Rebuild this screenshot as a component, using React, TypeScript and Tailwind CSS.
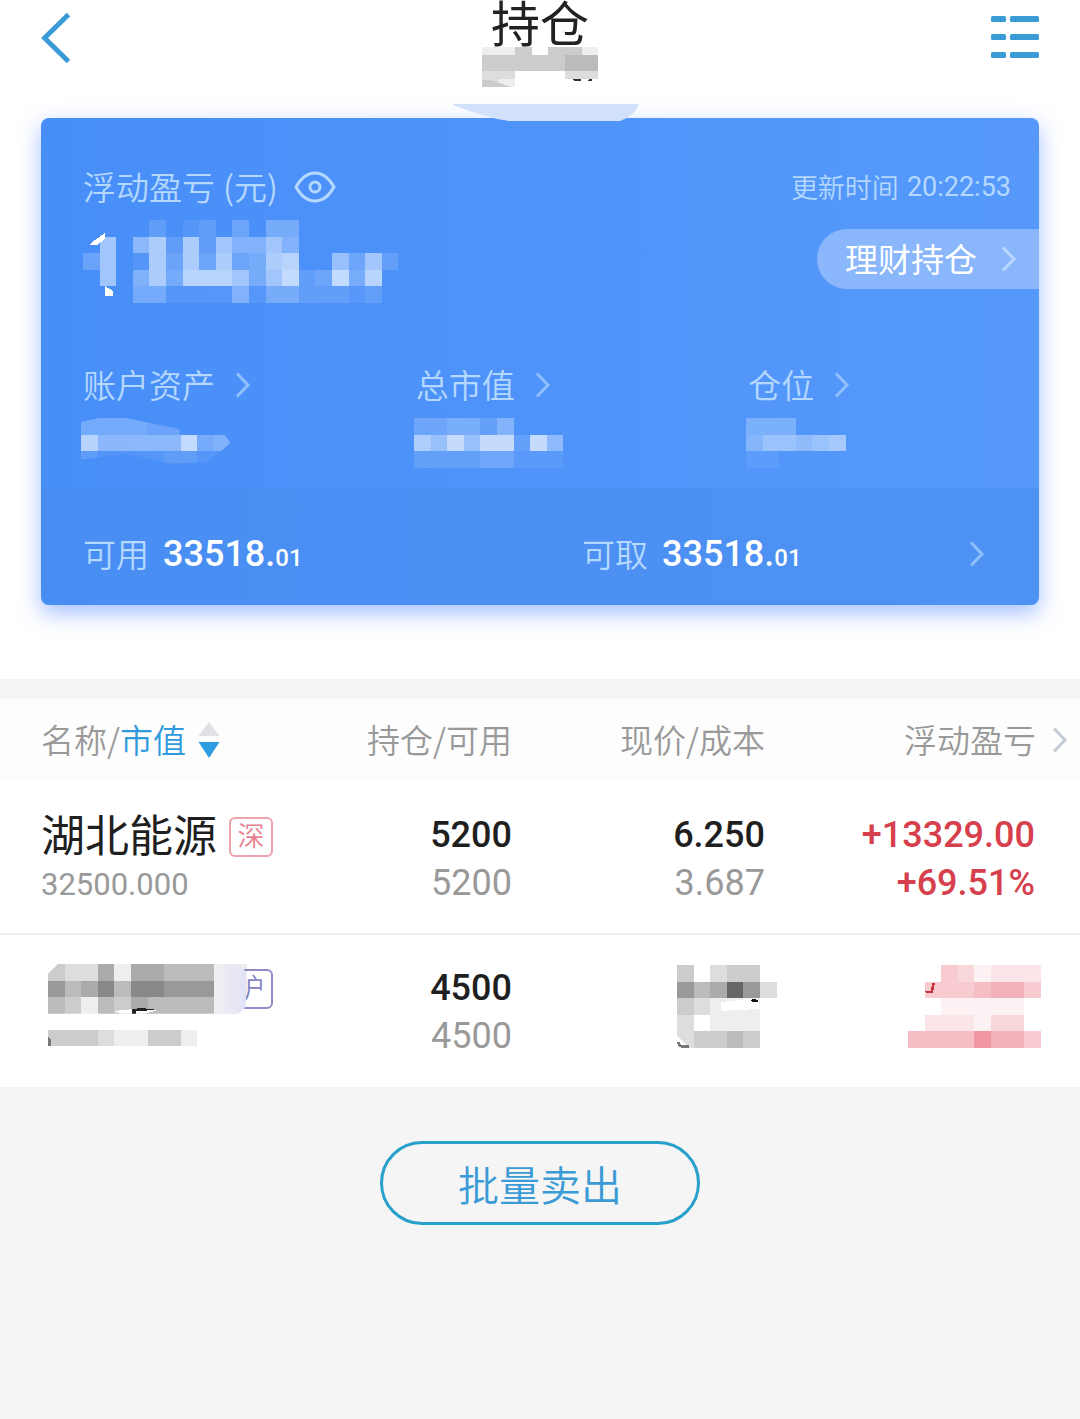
import type { ReactNode } from "react";

const CELL = 16.6;

type MosaicProps = {
  // one string per row, one hex digit (0-f) per cell for its opacity
  rows: string[];
  rowHeight?: number;
  className?: string;
  children?: ReactNode;
};

function Mosaic({ rows, rowHeight = CELL, className = "", children }: MosaicProps) {
  const width = rows[0].length * CELL;
  const height = rows.length * rowHeight;

  return (
    <svg
      width={width}
      height={height}
      viewBox={`0 0 ${width} ${height}`}
      className={`block shrink-0 ${className}`}
      fill="currentColor"
      shapeRendering="crispEdges"
      aria-hidden
    >
      {rows.map((row, y) =>
        row.split("").map((level, x) =>
          level === "0" ? null : (
            <rect
              key={`${x}-${y}`}
              x={x * CELL}
              y={y * rowHeight}
              width={CELL}
              height={rowHeight}
              opacity={parseInt(level, 16) / 15}
            />
          )
        )
      )}
      {children}
    </svg>
  );
}

function Chevron({ className = "" }: { className?: string }) {
  return (
    <svg
      width="16"
      height="28"
      viewBox="0 0 16 28"
      fill="none"
      stroke="currentColor"
      strokeWidth="3"
      className={`shrink-0 ${className}`}
      aria-hidden
    >
      <path d="M2 2.5 13 14 2 25.5" />
    </svg>
  );
}

function Header() {
  return (
    <header className="grid h-[118px] grid-cols-[1fr_auto_1fr] items-start bg-white px-[41px]">
      <button type="button" aria-label="返回" className="mt-3 justify-self-start text-[#3a9bd6]">
        <svg width="30" height="52" viewBox="0 0 30 52" fill="none" stroke="currentColor" strokeWidth="5">
          <path d="M27.500 2.500 3.500 26 27.500 49.500" />
        </svg>
      </button>

      <div className="relative flex flex-col items-center">
        <h1 className="pb-1.5 text-[49px] leading-[41px] text-[#222]">持仓</h1>
        <Mosaic rows={["1130331", "3333344", "3333344", "2200022", "2100000"]} rowHeight={8} className="text-black">
          <path d="M0 33h8l22 7H0z" fill="#ccc" />
          <path d="M90 32h9v2h-6zM105 33l5-1v2h-4z" fill="#333" />
        </Mosaic>
        {/* Smudge hanging over the top edge of the card */}
        <svg
          width="186"
          height="18"
          viewBox="0 0 186 18"
          className="absolute left-1/2 top-[104px] z-10 ml-1.5 -translate-x-1/2"
          aria-hidden
        >
          <path d="M0 0h186q-3 11-19 17H56Q34 14 0 1z" fill="#d2e1fa" />
        </svg>
      </div>

      <button type="button" aria-label="菜单" className="mt-4 justify-self-end text-[#3a9bd6]">
        <svg width="48" height="43" viewBox="0 0 48 43" fill="currentColor">
          {[0, 18, 36].map((y) => (
            <g key={y}>
              <rect x="0" y={y} width="15" height="6" rx="1.500" />
              <rect x="19" y={y} width="29" height="6" rx="1.500" />
            </g>
          ))}
        </svg>
      </button>
    </header>
  );
}

const profitMosaic = [
  "0000201203044000000",
  "0806929285585000000",
  "380193939349a007382",
  "080594aaa848b23b4a0",
  "0004411115144222120",
];

const summary = [
  {
    label: "账户资产",
    rows: ["444433000", "a66666b45", "211112211"],
    clip: "[clip-path:polygon(0_8%,12%_0,30%_0,66%_22%,66%_33%,96%_33%,100%_50%,94%_66%,84%_88%,60%_92%,30%_72%,0_84%)]",
  },
  { label: "总市值", rows: ["334425000", "97b7bb2b6", "222233111"], clip: "" },
  { label: "仓位", rows: ["444000", "577678", "110000"], clip: "" },
];

function Amount({ label, whole, cents }: { label: string; whole: string; cents: string }) {
  return (
    <div className="flex h-[42px] items-center">
      <span className="text-[33px] font-[350] text-[#b4d8ff]">{label}</span>
      <span className="ml-3.5 font-[Roboto,sans-serif] text-4xl font-medium text-white">
        {whole}.<span className="text-2xl">{cents}</span>
      </span>
    </div>
  );
}

function AssetCard() {
  return (
    <section className="mx-[41px] overflow-hidden rounded-lg bg-linear-to-r from-[#488ef8] to-[#5699fb] shadow-[0_8px_22px_rgba(74,128,255,0.5)]">
      <div className="flex items-start justify-between pl-[42px] pt-12">
        <div>
          <div className="flex h-[42px] items-center gap-4 text-[#b4d8ff]">
            <h2 className="flex text-[33px] font-[350]">
              浮动盈亏<span className="ml-2">(元)</span>
            </h2>
            <button type="button" aria-label="隐藏金额">
              <svg width="42" height="32" viewBox="0 0 42 32" fill="none" stroke="currentColor" strokeWidth="3">
                <path d="M2 16C7 7 13 2 21 2s14 5 19 14c-5 9-11 14-19 14S7 25 2 16z" />
                <circle cx="21" cy="16" r="5" />
              </svg>
            </button>
          </div>
          <Mosaic rows={profitMosaic} className="mt-3 text-[#eef6ff]">
            <path d="M12 20 22 13v6L14 25H7zM22 66l8 5v5h-8z" fill="#fff" />
          </Mosaic>
        </div>

        <div className="flex flex-col items-end">
          <p className="flex h-[42px] items-center gap-2 pr-7 text-[27px] font-[350] text-[#b4d8ff]">
            更新时间 <span className="font-[Roboto,sans-serif] font-normal">20:22:53</span>
          </p>
          <button
            type="button"
            className="mt-[21px] flex h-[60px] items-center rounded-l-full bg-[#8ab6fc] pl-7 pr-[22px] text-[33px] text-white"
          >
            理财持仓
            <Chevron className="ml-6 text-[#b9d8ff]" />
          </button>
        </div>
      </div>

      <div className="mt-[61px] grid grid-cols-3 pb-5">
        {summary.map((item) => (
          <div key={item.label} className="pl-[42px]">
            <button type="button" className="flex h-[42px] items-center gap-5 text-[33px] font-[350] text-[#b4d8ff]">
              {item.label}
              <Chevron className="text-[#8fc0fd]" />
            </button>
            <Mosaic rows={item.rows} className={`mt-3 -ml-0.5 text-[#eef6ff] ${item.clip}`} />
          </div>
        ))}
      </div>

      <div className="grid grid-cols-2 bg-[#4a8eee]/60 pb-[30px] pt-[45px]">
        <div className="pl-[42px]">
          <Amount label="可用" whole="33518" cents="01" />
        </div>
        <div className="flex items-center justify-between pl-[42px] pr-[54px]">
          <Amount label="可取" whole="33518" cents="01" />
          <Chevron className="text-[#8fc0fd]" />
        </div>
      </div>
    </section>
  );
}

function Holdings() {
  return (
    <table className="w-full table-fixed border-collapse bg-white text-right">
      <colgroup>
        <col className="w-[30%]" />
        <col className="w-[20%]" />
        <col className="w-[25%]" />
        <col className="w-[25%]" />
      </colgroup>
      <thead className="bg-[#fdfdfd] text-[33px] text-[#999]">
        <tr className="h-[82px]">
          <th className="pl-[41px] text-left font-[350]">
            <button type="button" className="flex items-center">
              名称/<span className="text-[#2f9bdc]">市值</span>
              <svg width="22" height="36" viewBox="0 0 22 36" className="ml-3" aria-hidden>
                <path d="M11 0 21.500 14H.5z" fill="#dfe1e4" />
                <path d="M.5 20h21L11 36z" fill="#2f9be0" />
              </svg>
            </button>
          </th>
          <th className="pr-7 font-[350]">持仓/可用</th>
          <th className="pr-[45px] font-[350]">现价/成本</th>
          <th className="pr-3 font-[350]">
            <button type="button" className="ml-auto flex items-center gap-4">
              浮动盈亏
              <Chevron className="text-[#c3cbd6]" />
            </button>
          </th>
        </tr>
      </thead>
      <tbody className="align-top font-[Roboto,'Noto_Sans_CJK_SC',sans-serif] text-4xl font-medium leading-[48px] text-[#1f1f1f]">
        <tr className="border-b-2 border-[#f0f0f0]">
          <td className="pb-[26px] pl-[41px] pt-[30px] text-left">
            <div className="flex h-[52px] items-center whitespace-nowrap">
              <span className="text-[44px] font-normal">湖北能源</span>
              <span className="ml-3 flex h-10 w-11 items-center justify-center rounded-md border-2 border-[#eda3ae] text-[27px] font-[350] text-[#e87f8e]">
                深
              </span>
            </div>
            <div className="text-[31px] font-normal leading-[44px] text-[#999]">32500.000</div>
          </td>
          <td className="pr-7 pt-[30px]">
            5200
            <div className="font-normal text-[#999]">5200</div>
          </td>
          <td className="pr-[45px] pt-[30px]">
            6.250
            <div className="font-normal text-[#999]">3.687</div>
          </td>
          <td className="pr-[45px] pt-[30px] text-[#d6404c]">
            +13329.00
            <div>+69.51%</div>
          </td>
        </tr>
        <tr>
          <td className="pb-[41px] pl-12 pt-[29px] text-left">
            <div className="relative flex h-[50px] items-center">
              <Mosaic
                rows={["322515544411", "645747766611", "431435444400"]}
                className="z-10 text-black [clip-path:polygon(0_20%,5%_0,100%_0,100%_100%,0_100%)]"
              >
                <path d="M66 47 86 45l24 1-14 4H74z" fill="#fff" />
                <path d="M84 45l10-1 16 2-22 1v3h-4z" fill="#222" />
              </Mosaic>
              <span className="absolute left-[181px] flex h-10 w-11 items-center justify-center rounded-md border-2 border-[#8f8cc8] text-[27px] font-[350] text-[#8481c4]">
                沪
              </span>
              <span className="absolute left-[166px] z-10 h-[50px] w-8 rounded-r-xl bg-linear-to-r from-[#f0f0f0] to-[#e2e2f8]" />
            </div>
            <Mosaic rows={["333211331"]} className="mt-4 text-black">
              <path d="M0 7l3 3v7H0zM94 16h6v1h-6z" fill="#777" />
            </Mosaic>
          </td>
          <td className="pr-7 pt-[29px]">
            4500
            <div className="font-normal text-[#999]">4500</div>
          </td>
          <td className="pr-[33px] pt-[30px]">
            <Mosaic rows={["302330", "645962", "321110", "201110", "233430"]} className="ml-auto text-black">
              <path d="M44 37 72 34l10 2v8L44 46z" fill="#fff" />
              <path d="M73 35q4 4 9 1-4-3-9-1z" fill="#111" />
              <path d="M0 70 12 83H0z" fill="#fff" />
              <path d="M1 77q2 7 11 4" fill="none" stroke="#777" strokeWidth="3" />
            </Mosaic>
          </td>
          <td className="pr-[39px] pt-[30px]">
            <Mosaic
              rows={["00431222", "04445664", "00111110", "02221330", "55558664"]}
              className="ml-auto text-[#e23b50]"
            >
              <path d="M17 26h6l1-8h3l-2 10h-7z" fill="#c8323c" />
            </Mosaic>
          </td>
        </tr>
      </tbody>
    </table>
  );
}

export default function App() {
  return (
    <main className="min-h-screen bg-[#f5f5f5] font-['Noto_Sans_CJK_SC',sans-serif]">
      <div className="bg-white pb-[74px]">
        <Header />
        <AssetCard />
      </div>

      <div className="pt-5">
        <Holdings />
      </div>

      <div className="flex justify-center pt-[54px]">
        <button
          type="button"
          className="h-[84px] w-80 rounded-full border-[3px] border-[#27a0cb] text-[41px] font-[350] text-[#3a9bd6]"
        >
          批量卖出
        </button>
      </div>
    </main>
  );
}
